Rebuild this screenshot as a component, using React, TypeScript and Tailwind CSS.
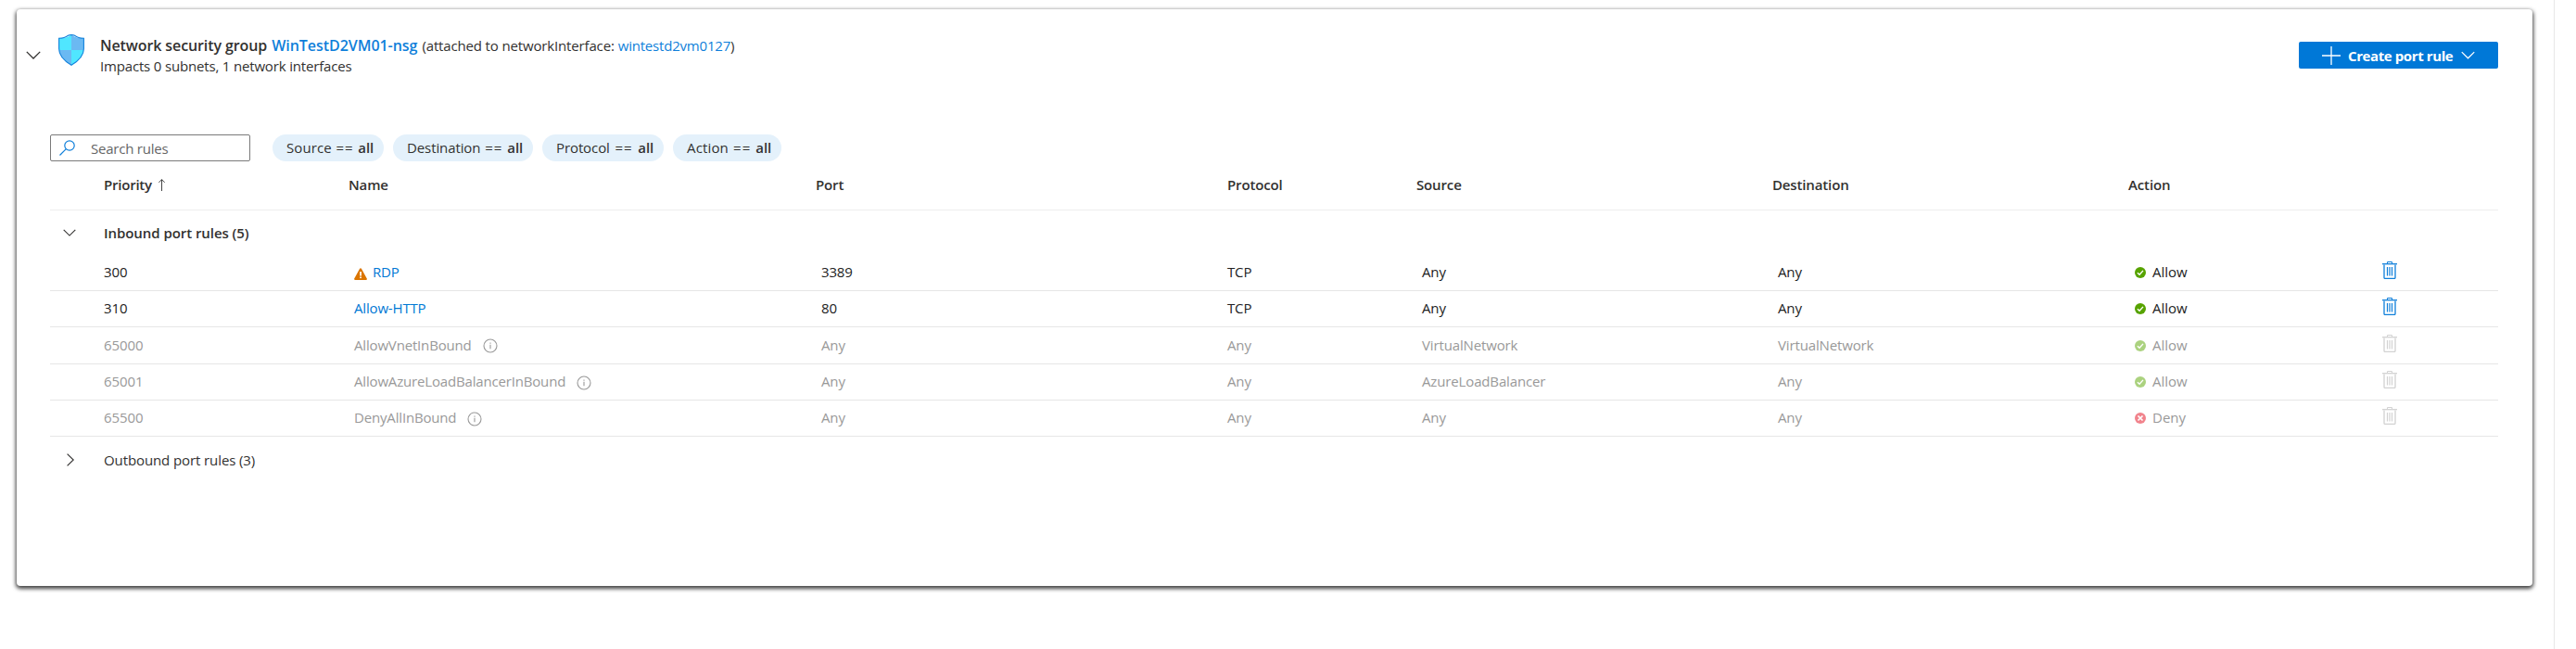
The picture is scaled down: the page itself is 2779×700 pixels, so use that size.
import type { ReactNode } from "react";

type Rule = {
  priority: string;
  name: string;
  port: string;
  protocol: string;
  source: string;
  destination: string;
  action: "Allow" | "Deny";
  warning?: boolean;
  builtIn?: boolean;
  height: string;
};

const rules: Rule[] = [
  { priority: "300", name: "RDP", port: "3389", protocol: "TCP", source: "Any", destination: "Any", action: "Allow", warning: true, height: "h-[39px]" },
  { priority: "310", name: "Allow-HTTP", port: "80", protocol: "TCP", source: "Any", destination: "Any", action: "Allow", height: "h-[39px]" },
  { priority: "65000", name: "AllowVnetInBound", port: "Any", protocol: "Any", source: "VirtualNetwork", destination: "VirtualNetwork", action: "Allow", builtIn: true, height: "h-[40px]" },
  { priority: "65001", name: "AllowAzureLoadBalancerInBound", port: "Any", protocol: "Any", source: "AzureLoadBalancer", destination: "Any", action: "Allow", builtIn: true, height: "h-[39px]" },
  { priority: "65500", name: "DenyAllInBound", port: "Any", protocol: "Any", source: "Any", destination: "Any", action: "Deny", builtIn: true, height: "h-[39px]" },
];

const filters = [
  { label: "Source", box: "w-[120px]", tracking: "tracking-[0.1px]" },
  { label: "Destination", box: "w-[151px]", tracking: "tracking-[-0.1px]" },
  { label: "Protocol", box: "w-[131px]", tracking: "tracking-[-0.1px]" },
  { label: "Action", box: "w-[117px]", tracking: "tracking-[0.15px]" },
];

const columns =
  "grid grid-cols-[58px_264px_504px_444px_204px_384px_384px_274px_125px]";

function Chevron({ className, w = 16, h = 9 }: { className?: string; w?: number; h?: number }) {
  return (
    <svg className={className} width={w} height={h} viewBox="0 0 16 9" fill="none" stroke="currentColor" strokeWidth="1.3">
      <path d="M0.8 0.9 8 8 15.2 0.9" />
    </svg>
  );
}

function ShieldIcon() {
  return (
    <svg width="28" height="34" viewBox="0 0 28 34">
      <defs>
        <clipPath id="shield">
          <path d="M14 .5C17.500 3.300 22 4.200 27.500 4.300V15.500C27.500 24 19.500 30 14 33.500 8.500 30 .5 24 .5 15.500V4.300C6 4.200 10.500 3.300 14 .5Z" />
        </clipPath>
      </defs>
      <g clipPath="url(#shield)">
        <rect width="14" height="17" fill="#50e6ff" />
        <rect x="14" width="14" height="17" fill="#6bb9f2" />
        <rect y="17" width="14" height="17" fill="#6bb9f2" />
        <rect x="14" y="17" width="14" height="17" fill="#50e6ff" />
      </g>
      <path
        d="M10.500 1.300C12 .4 16 .4 17.500 1.300 20 3.300 23 4.300 27.400 4.300V15.500C27.400 24 19.500 30 14 33.300 8.500 30 .6 24 .6 15.500V4.300C5 4.300 8 3.300 10.500 1.300Z"
        fill="none"
        stroke="#1583dc"
        strokeWidth="1.1"
      />
    </svg>
  );
}

function SearchIcon() {
  return (
    <svg width="17" height="17" viewBox="0 0 17 17" fill="none" stroke="#0f7fda" strokeWidth="1.2">
      <circle cx="11" cy="6" r="5.2" />
      <path d="M7.300 9.700.5 16.500" />
    </svg>
  );
}

function WarningIcon() {
  return (
    <svg width="14" height="13" viewBox="0 0 14 13">
      <path d="M7 .2c.4 0 .7.200.900.600l5.900 10.700c.4.700 0 1.500-.8 1.500H1c-.8 0-1.200-.8-.8-1.500L6.100.800C6.300.4 6.600.200 7 .200Z" fill="#db7500" />
      <rect x="6.200" y="4" width="1.700" height="4.600" fill="#fff" />
      <rect x="6.200" y="9.500" width="1.700" height="1.600" fill="#fff" />
    </svg>
  );
}

function InfoIcon() {
  return (
    <svg width="16" height="16" viewBox="0 0 16 16" fill="none" stroke="#999" strokeWidth="1.1">
      <circle cx="8" cy="8" r="7" />
      <path d="M8 6.800V11.300M8 4.600V5.700" />
    </svg>
  );
}

function StatusIcon({ action, faded }: { action: Rule["action"]; faded?: boolean }) {
  if (action === "Deny") {
    return (
      <svg width="12" height="12" viewBox="0 0 12 12">
        <circle cx="6" cy="6" r="6" fill="#f1838c" />
        <path d="M3.500 3.500 8.500 8.500M8.500 3.500 3.500 8.500" stroke="#fff" strokeWidth="1.700" />
      </svg>
    );
  }
  return (
    <svg width="12" height="12" viewBox="0 0 12 12">
      <circle cx="6" cy="6" r="6" fill={faded ? "#abd27f" : "#57a300"} />
      <path d="M2.900 6.200 5.100 8.300 9 3.900" fill="none" stroke="#fff" strokeWidth="1.400" />
    </svg>
  );
}

function TrashIcon({ faded }: { faded?: boolean }) {
  return (
    <svg width="16" height="19" viewBox="0 0 16 19" fill="none" stroke={faded ? "#d2d2d2" : "#0f7fda"}>
      <path d="M5.500 2.500V.5H10.500V2.500" />
      <path d="M0 2.700H16" strokeWidth="1.300" />
      <path d="M2 3.500V17.500Q2 18.400 3 18.400H13Q14 18.400 14 17.500V3.500" strokeWidth="1.300" />
      <path d="M5.500 6V15.500M8 6V15.500M10.500 6V15.500" strokeWidth="1.200" />
    </svg>
  );
}

function Cell({ children, className = "pb-[2px]" }: { children?: ReactNode; className?: string }) {
  return <div className={`flex items-center whitespace-nowrap ${className}`}>{children}</div>;
}

function RuleRow({ rule }: { rule: Rule }) {
  const nameColor = rule.builtIn ? "" : "text-[#0078d4]";
  return (
    <div className={`${columns} ${rule.height} border-b border-[#e6e6e6] ${rule.builtIn ? "text-[#999]" : "text-[#222]"}`}>
      <Cell />
      <Cell className="pb-[2px] tracking-[-0.08px]">{rule.priority}</Cell>
      <Cell className={`pb-[2px] pl-[6px] tracking-[-0.17px] ${nameColor}`}>
        {rule.warning && (
          <span className="mr-[6px] pt-1">
            <WarningIcon />
          </span>
        )}
        {rule.name}
        {rule.builtIn && (
          <span className="ml-[12px] pt-[3px]">
            <InfoIcon />
          </span>
        )}
      </Cell>
      <Cell className="pb-[2px] pl-[6px]">{rule.port}</Cell>
      <Cell>{rule.protocol}</Cell>
      <Cell className="pb-[2px] pl-[6px]">{rule.source}</Cell>
      <Cell className="pb-[2px] pl-[6px]">{rule.destination}</Cell>
      <Cell className="gap-[7px] pb-[2px] pl-[7px] tracking-normal">
        <span className="pt-[2px]">
          <StatusIcon action={rule.action} faded={rule.builtIn} />
        </span>
        {rule.action}
      </Cell>
      <Cell className="pb-[5px]">
        <TrashIcon faded={rule.builtIn} />
      </Cell>
    </div>
  );
}

export default function App() {
  return (
    <div className="flex h-[700px] w-[2779px] bg-white font-['Open_Sans',sans-serif] text-[15px] leading-5 tracking-[-0.14px] text-[#323130]">
      <div className="h-full w-[2756px] border-r border-[#e8e8e8] pt-[10px] pl-[18px]">
        <section className="h-[622px] w-[2714px] rounded-[4px] bg-white pr-[37px] pl-[36px] shadow-[0_2px_4px_1px_rgba(0,0,0,0.75)]">
          <header className="flex h-[134px] items-start">
            <button aria-label="Collapse" className="mt-[45px] -ml-[26px]">
              <Chevron />
            </button>
            <div className="mt-[27px] ml-[19px]">
              <ShieldIcon />
            </div>
            <div className="mt-[29px] ml-[17px] whitespace-nowrap">
              <div className="flex h-[22px] items-baseline">
                <h1 className="text-[16px] font-semibold tracking-[-0.1px]">Network security group</h1>
                <a className="ml-[5px] text-[16px] font-semibold tracking-[-0.04px] text-[#0f7fda]">WinTestD2VM01-nsg</a>
                <span className="ml-[5px] tracking-[-0.15px]">(attached to networkInterface:</span>
                <a className="ml-[4px] tracking-[-0.2px] text-[#0f7fda]">wintestd2vm0127</a>
                <span>)</span>
              </div>
              <div className="tracking-[-0.17px]">Impacts 0 subnets, 1 network interfaces</div>
            </div>
            <button className="mt-[35px] ml-auto flex h-[29px] w-[215px] items-center rounded-[2px] bg-[#0078d7] pl-[25px] text-white">
              <svg width="20" height="20" viewBox="0 0 20 20" stroke="#fff" strokeWidth="1.3">
                <path d="M10 0V20M0 10H20" />
              </svg>
              <span className="mt-[1px] ml-[8px] font-bold tracking-[-0.4px] whitespace-nowrap">Create port rule</span>
              <Chevron className="ml-[9px]" w={15} h={9} />
            </button>
          </header>

          <div className="mt-[1px] flex h-[29px]">
            <div className="flex w-[216px] items-center rounded-[2px] border border-[#7a7a7a] pl-[9px]">
              <SearchIcon />
              <span className="mt-px ml-[17px] tracking-[-0.22px] text-[#666]">Search rules</span>
            </div>
            <div className="ml-[24px] flex gap-[10px]">
              {filters.map((f) => (
                <div key={f.label} className={`flex items-center justify-between rounded-full bg-[#e4f1fb] pr-[11px] pb-[2px] pl-[15px] ${f.box}`}>
                  <span className={f.tracking}>{f.label}</span>
                  <span className="tracking-[1px]">==</span>
                  <span className="font-semibold">all</span>
                </div>
              ))}
            </div>
          </div>

          <div className={`${columns} h-[53px] border-b border-[#ededed] pt-[15px] font-semibold`}>
            <div />
            <div className="flex gap-[7px] tracking-[-0.22px]">
              Priority
              <svg className="mt-[4px]" width="7" height="13" viewBox="0 0 7 13" fill="none" stroke="#444">
                <path d="M3.500 .5V13M.4 3.800 3.500.700 6.600 3.800" />
              </svg>
            </div>
            <div>Name</div>
            <div>Port</div>
            <div>Protocol</div>
            <div>Source</div>
            <div>Destination</div>
            <div>Action</div>
          </div>

          <div className="flex h-[48px] items-center">
            <div className="w-[58px] pl-[14px]">
              <Chevron w={14} h={8} />
            </div>
            <div className="font-semibold tracking-[-0.06px]">Inbound port rules (5)</div>
          </div>

          {rules.map((rule) => (
            <RuleRow key={rule.priority} rule={rule} />
          ))}

          <div className="flex h-[50px] items-center">
            <div className="w-[58px] pl-[18px]">
              <svg width="8" height="14" viewBox="0 0 8 14" fill="none" stroke="currentColor" strokeWidth="1.200">
                <path d="M.6.600 7.200 7 .6 13.400" />
              </svg>
            </div>
            <div className="tracking-[-0.1px]">Outbound port rules (3)</div>
          </div>
        </section>
      </div>
    </div>
  );
}
